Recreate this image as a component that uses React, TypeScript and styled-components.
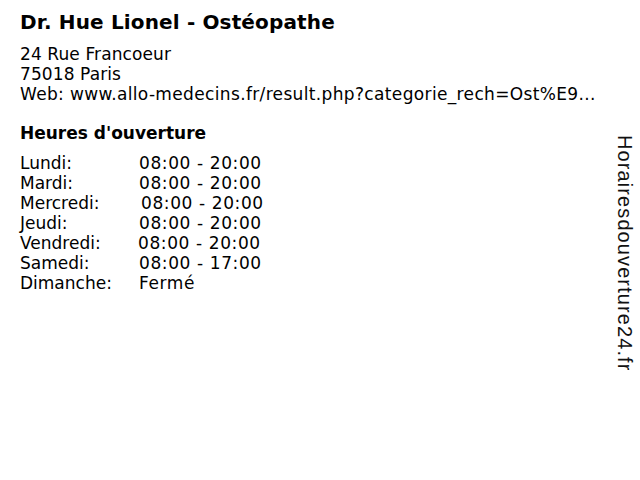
import React from "react";
import styled, { createGlobalStyle } from "styled-components";

const GlobalStyle = createGlobalStyle`
  html, body { margin: 0; padding: 0; background: #fff; }
  body { width: 640px; height: 480px; overflow: hidden; }
`;

const Page = styled.div`
  display: flex;
  width: 640px;
  height: 480px;
  color: #000;
`;

const Main = styled.div`
  flex: 1;
  min-width: 0;
  padding: 10px 0 0 20px;
  font-family: "DejaVu Sans", Verdana, sans-serif;
  font-size: 17px;
  line-height: 20px;
`;

const Title = styled.h1`
  margin: 0 0 10px;
  font-size: 20px;
  line-height: 24px;
  font-weight: bold;
  letter-spacing: 0.15px;
`;

const Address = styled.div`
  display: flex;
  flex-direction: column;
`;

const Line = styled.div<{ $spacing?: number }>`
  white-space: nowrap;
  letter-spacing: ${(p) => p.$spacing ?? 0.1}px;
`;

const Heading = styled.h2`
  margin: 19px 0 10px;
  font-size: 17px;
  line-height: 20px;
  font-weight: bold;
`;

const Hours = styled.div`
  display: grid;
  grid-template-columns: 119px auto;
  justify-content: start;
`;

const Day = styled.span``;

const Time = styled.span<{ $shift?: number }>`
  letter-spacing: 0.6px;
  margin-left: ${(p) => p.$shift ?? 0}px;
`;

const Side = styled.div`
  width: 44px;
  flex-shrink: 0;
  display: flex;
  justify-content: flex-start;
  padding-top: 135px;
  padding-left: 17px;
  box-sizing: border-box;
`;

const Brand = styled.div`
  writing-mode: vertical-rl;
  font-family: "Liberation Sans", Arial, sans-serif;
  font-size: 20px;
  line-height: 24px;
  letter-spacing: 1.1px;
  color: #111;
`;

const hours: { day: string; time: string; shift?: number }[] = [
  { day: "Lundi:", time: "08:00 - 20:00" },
  { day: "Mardi:", time: "08:00 - 20:00" },
  { day: "Mercredi:", time: "08:00 - 20:00", shift: 2 },
  { day: "Jeudi:", time: "08:00 - 20:00" },
  { day: "Vendredi:", time: "08:00 - 20:00", shift: -1 },
  { day: "Samedi:", time: "08:00 - 17:00" },
  { day: "Dimanche:", time: "Fermé" },
];

export default function App() {
  return (
    <>
      <GlobalStyle />
      <Page>
        <Main>
          <Title>Dr. Hue Lionel - Ostéopathe</Title>
          <Address>
            <Line>24 Rue Francoeur</Line>
            <Line>75018 Paris</Line>
            <Line $spacing={0.35}>Web: www.allo-medecins.fr/result.php?categorie_rech=Ost%E9...</Line>
          </Address>
          <Heading>Heures d'ouverture</Heading>
          <Hours>
            {hours.map((h) => (
              <React.Fragment key={h.day}>
                <Day>{h.day}</Day>
                <Time $shift={h.shift}>{h.time}</Time>
              </React.Fragment>
            ))}
          </Hours>
        </Main>
        <Side>
          <Brand>Horairesdouverture24.fr</Brand>
        </Side>
      </Page>
    </>
  );
}
